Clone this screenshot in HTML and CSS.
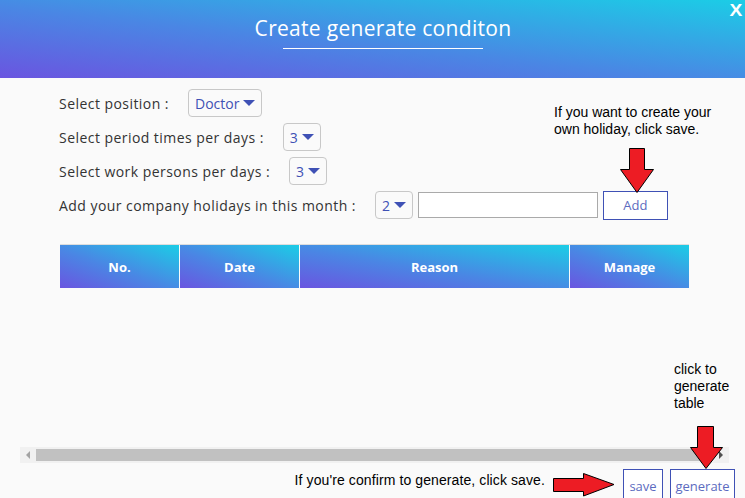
FILE: index.html
```html
<!DOCTYPE html>
<html>
<head>
<meta charset="utf-8">
<link rel="stylesheet" href="styles.css">
</head>
<body>
<div class="modal">
  <header class="head">
    <h1 class="title">Create generate conditon</h1>
    <span class="close">X</span>
  </header>
  <main class="content">
    <div class="form">
      <div class="row">
        <span class="label">Select position :</span>
        <span class="select">Doctor <i class="caret"></i></span>
      </div>
      <div class="row">
        <span class="label">Select period times per days :</span>
        <span class="select">3 <i class="caret"></i></span>
      </div>
      <div class="row">
        <span class="label">Select work persons per days :</span>
        <span class="select">3 <i class="caret"></i></span>
      </div>
      <div class="row">
        <span class="label">Add your company holidays in this month :</span>
        <span class="select">2 <i class="caret"></i></span>
        <span class="input"></span>
        <span class="btn add">Add</span>
      </div>
    </div>
    <div class="note note-top">If you want to create your<br>own holiday, click save.</div>
    <svg class="arrow arrow-add" width="36" height="46" viewBox="0 0 36 46"><polygon points="9.5,0.5 24.5,0.5 24.5,21.5 33.5,21.5 17,44.5 0.5,21.5 9.5,21.5" fill="#ed1c24" stroke="#000" stroke-width="1"/></svg>
    <div class="table">
      <div class="th c-no">No.</div>
      <div class="th c-date">Date</div>
      <div class="th c-reason">Reason</div>
      <div class="th c-manage">Manage</div>
    </div>
    <div class="note note-gen">click to<br>generate<br>table</div>
    <svg class="arrow arrow-gen" width="34" height="44" viewBox="0 0 34 44"><polygon points="7.5,0.5 23.5,0.5 23.5,21.5 32.5,21.5 16,42.5 0.5,21.5 7.5,21.5" fill="#ed1c24" stroke="#000" stroke-width="1"/></svg>
    <div class="scrollbar">
      <span class="sb-arrow sb-left"></span>
      <span class="thumb"></span>
      <span class="sb-arrow sb-right"></span>
    </div>
    <div class="footer">
      <span class="note note-save">If you're confirm to generate, click save.</span>
      <svg class="arrow-right" width="62" height="24" viewBox="0 0 62 24"><polygon points="0.5,5.5 30.5,5.5 30.5,0.5 61,11.5 30.5,23 30.5,18.5 0.5,18.5" fill="#ed1c24" stroke="#000" stroke-width="1"/></svg>
      <span class="btn save">save</span>
      <span class="btn gen">generate</span>
    </div>
  </main>
</div>
</body>
</html>
```
FILE: styles.css
```css
* { box-sizing: border-box; }
html, body { margin: 0; padding: 0; }
body {
  width: 745px;
  height: 498px;
  overflow: hidden;
  background: #fafafa;
  font-family: "Open Sans", "Noto Sans", sans-serif;
}
.modal { position: relative; width: 745px; height: 498px; }
.head {
  height: 78px;
  background: linear-gradient(to top right, #6a55e0 0%, #4a86e4 45%, #1bcde6 100%);
  display: flex;
  justify-content: center;
  padding-left: 21px;
  position: relative;
}
.title {
  margin: 14px 0 0;
  height: 35px;
  width: 200px;
  display: flex;
  justify-content: center;
  white-space: nowrap;
  font-weight: 400;
  font-size: 21px;
  line-height: 28px;
  color: #fff;
  border-bottom: 1px solid #fff;
  letter-spacing: 0.3px;
}
.close {
  position: absolute;
  right: 0;
  top: 2px;
  color: #fff;
  font-family: "Liberation Sans", Arial, sans-serif;
  font-weight: 700;
  font-size: 16px;
  transform: scaleX(1.2);
  width: 14px;
}
.content { position: relative; height: 420px; }
.form {
  padding: 11px 0 0 59px;
  display: flex;
  flex-direction: column;
  gap: 6px;
}
.row {
  display: flex;
  align-items: center;
  height: 28px;
}
.label {
  font-size: 14px;
  color: #333;
  margin-right: 19px;
  letter-spacing: 0.45px;
}
.select {
  height: 28px;
  border: 1px solid #c8c8c8;
  border-radius: 4px;
  padding: 0 6px;
  display: flex;
  align-items: center;
  gap: 4px;
  color: #3f51b5;
  font-size: 14px;
}
.caret {
  width: 0; height: 0;
  border-left: 6px solid transparent;
  border-right: 6px solid transparent;
  border-top: 6px solid #3f51b5;
}
.input {
  width: 180px;
  height: 26px;
  border: 1px solid #aaa;
  margin-left: 5px;
  background: #fff;
}
.btn {
  border: 1px solid #3f51b5;
  color: #5c6bc0;
  display: flex;
  align-items: center;
  justify-content: center;
  font-size: 13px;
  background: #fff;
}
.add { width: 65px; height: 29px; margin-left: 5px; }
.note {
  font-family: "Liberation Sans", Arial, sans-serif;
  font-size: 14px;
  line-height: 17px;
  color: #000;
}
.note-top { position: absolute; left: 554px; top: 26px; }
.arrow { position: absolute; }
.arrow-add { left: 620px; top: 70px; }
.table {
  margin: 25px 0 0 60px;
  width: 629px;
  display: flex;
  gap: 1px;
  border-top: 1px solid #ddd;
}
.th {
  height: 43px;
  background: linear-gradient(to top right, #6a55e0 0%, #4a86e4 45%, #1bcde6 100%);
  color: #fff;
  font-weight: 700;
  font-size: 13px;
  display: flex;
  align-items: center;
  justify-content: center;
}
.c-no { width: 119px; }
.c-date { width: 119px; }
.c-reason { width: 269px; }
.c-manage { width: 119px; }
.note-gen { position: absolute; left: 674px; top: 283px; }
.arrow-gen { left: 690px; top: 348px; }
.scrollbar {
  margin: 159px 0 0 20px;
  width: 709px;
  height: 16px;
  background: #f1f1f1;
  display: flex;
  align-items: center;
}
.thumb { height: 12px; flex: 1; background: #c1c1c1; margin: 0 2px; }
.sb-arrow { width: 0; height: 0; border-top: 4px solid transparent; border-bottom: 4px solid transparent; margin: 0 4px; }
.sb-left { border-right: 4px solid #a3a3a3; margin-left: 6px; }
.sb-right { border-left: 4px solid #505050; margin-right: 6px; margin-left: 14px; }
.footer {
  display: flex;
  align-items: flex-start;
  justify-content: flex-end;
  padding-right: 10px;
  margin-top: 6px;
}
.note-save { margin-top: 3px; margin-right: 8px; letter-spacing: 0.1px; }
.arrow-right { margin-top: 4px; margin-right: 8px; }
.save { width: 40px; height: 34px; }
.gen { width: 65px; height: 34px; margin-left: 7px; }
```
